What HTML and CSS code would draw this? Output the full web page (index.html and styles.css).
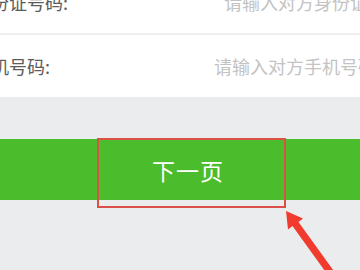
FILE: index.html
```html
<!DOCTYPE html>
<html lang="zh-CN">
<head>
    <meta charset="UTF-8">
    <meta name="viewport" content="width=device-width, initial-scale=1.0">
    <title>下一页</title>
    <link rel="stylesheet" href="styles.css">
</head>
<body>
    <div class="form-list">
        <div class="form-row">
            <span class="form-label">身份证号码:</span>
            <span class="form-input form-input-id">请输入对方身份证号码</span>
        </div>
        <div class="form-row">
            <span class="form-label">手机号码:</span>
            <span class="form-input form-input-phone">请输入对方手机号码</span>
        </div>
    </div>

    <div class="next-wrap">
        <button class="next-btn" type="button">下一页</button>
        <div class="mark-box"></div>
        <svg class="mark-arrow" width="360" height="270" viewBox="0 0 360 270">
            <polygon points="286,211 303,218.5 298.5,222 336,274 330,278 292.5,226 288,229.5" fill="#f13b2e"/>
        </svg>
    </div>
</body>
</html>
```

FILE: styles.css
```css
body {
    margin: 0;
    background-color: #ebeced;
    font-family: "Noto Sans CJK SC", "Noto Sans", sans-serif;
    overflow: hidden;
    height: 270px;
}
.form-list {
    margin-top: -29px;
    background-color: #ffffff;
}
.form-row {
    display: flex;
    align-items: center;
    height: 62px;
    overflow: hidden;
    white-space: nowrap;
}
.form-row + .form-row {
    border-top: 2px solid #efefef;
}
.form-label {
    margin-left: -27px;
    font-size: 18px;
    color: #5c5c5c;
    flex-shrink: 0;
}
.form-input {
    font-size: 18px;
    color: #c3c3c3;
}
.form-input-id {
    margin-left: 156px; /* placeholder starts at x=225 */
}
.form-input-phone {
    margin-left: 164px; /* placeholder starts at x=215 */
}
.next-wrap {
    margin-top: 42px;
}
.next-btn {
    display: block;
    width: 100%;
    height: 61px;
    border: none;
    background-color: #4bbc2b;
    color: #ffffff;
    font-family: inherit;
    font-size: 23px;
    letter-spacing: 1px;
    padding: 0 0 0 16px;
}

/* annotation drawn over the screenshot */
.mark-box {
    position: absolute;
    left: 97px;
    top: 138px;
    width: 185px;
    height: 66px;
    border: 2px solid #dc5147;
}
.mark-arrow {
    position: absolute;
    left: 0;
    top: 0;
}
```
